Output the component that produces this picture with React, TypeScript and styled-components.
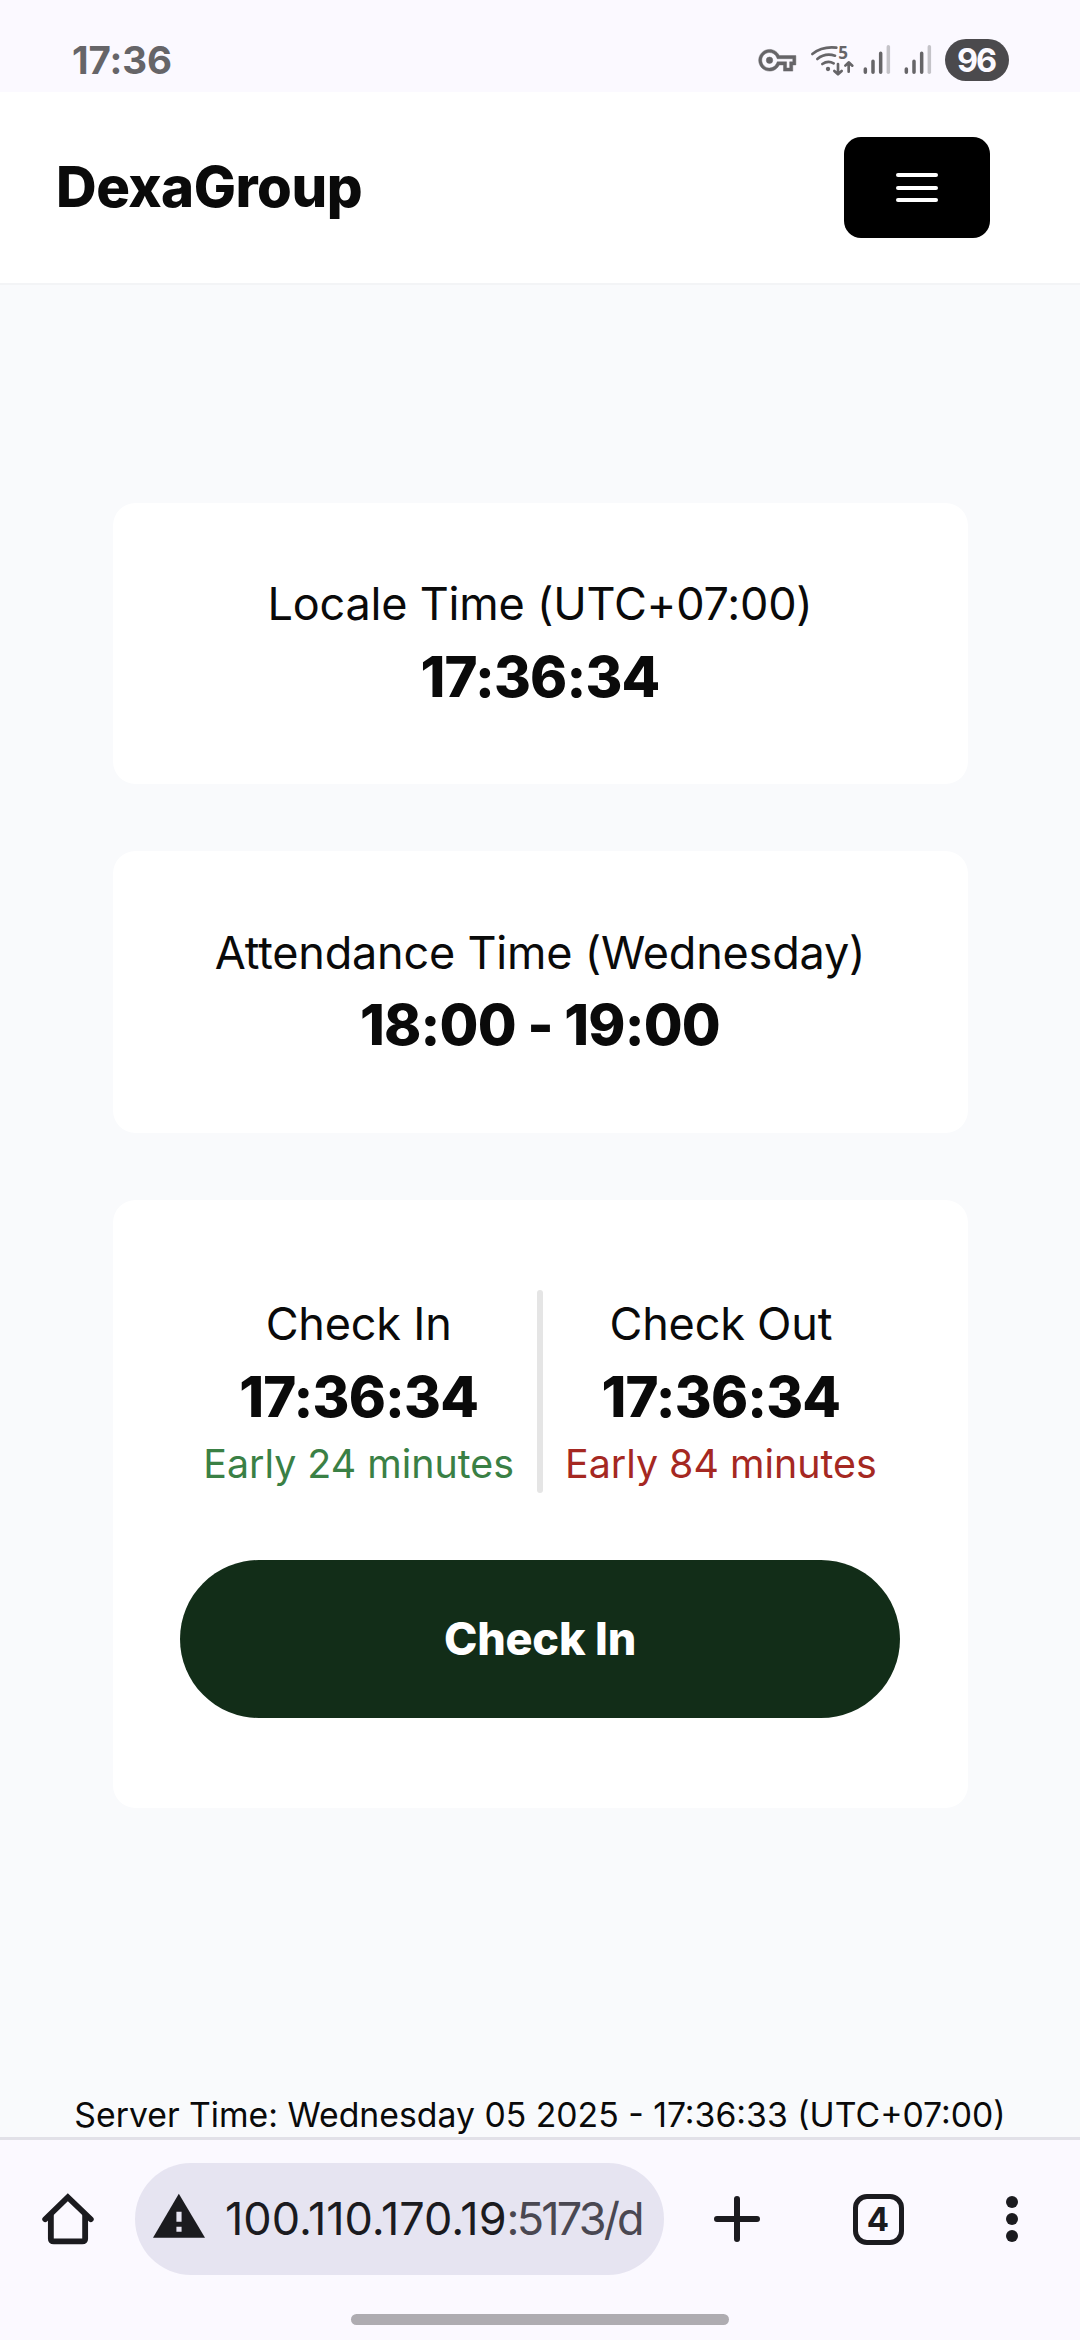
import React from "react";
import styled, { createGlobalStyle } from "styled-components";

const GlobalStyle = createGlobalStyle`
  *, *::before, *::after { box-sizing: border-box; }
  body { margin: 0; background: #f9fafc; }
`;

const Screen = styled.div`
  width: 1080px;
  height: 2340px;
  display: flex;
  flex-direction: column;
  overflow: hidden;
  background: #f9fafc;
  color: #0a0a0a;
  font-family: Inter, "Liberation Sans", sans-serif;
`;

const StatusBar = styled.div`
  flex: none;
  height: 92px;
  padding: 28px 71px 0 72px;
  display: flex;
  align-items: center;
  justify-content: space-between;
  background: #fbf9ff;
  color: #666568;
`;

const Clock = styled.span`
  font-size: 38.5px;
  font-weight: 700;
  letter-spacing: -0.1px;
  line-height: 42px;
`;

const StatusIcons = styled.div`
  display: flex;
  align-items: center;
`;

const Battery = styled.span`
  width: 64px;
  height: 42px;
  margin-left: 2px;
  border-radius: 21px;
  display: flex;
  align-items: center;
  justify-content: center;
  background: #4b4a4d;
  color: #fbf9ff;
  font-size: 32.5px;
  font-weight: 700;
  letter-spacing: -2px;
  padding-right: 2px;
`;

const Header = styled.header`
  flex: none;
  height: 193px;
  padding: 0 90px 0 56px;
  display: flex;
  align-items: center;
  justify-content: space-between;
  background: #fff;
  border-bottom: 2px solid #f3f4f6;
`;

const Brand = styled.h1`
  margin: 0;
  font-size: 56.25px;
  line-height: 78.75px;
  font-weight: 800;
  letter-spacing: -0.5px;
`;

const MenuButton = styled.button`
  width: 146px;
  height: 101px;
  border: 0;
  padding: 0;
  border-radius: 17px;
  background: #000;
  display: flex;
  flex-direction: column;
  align-items: center;
  justify-content: center;
  gap: 8.2px;
`;

const MenuLine = styled.span`
  width: 42px;
  height: 4px;
  border-radius: 2px;
  background: #fff;
`;

const Main = styled.main`
  flex: 1;
  min-height: 0;
  padding-top: 217.5px;
  display: flex;
  flex-direction: column;
  align-items: center;
  justify-content: space-between;
`;

const CardStack = styled.div`
  width: 855px;
  display: flex;
  flex-direction: column;
  gap: 67.5px;
`;

const Card = styled.section<{ $tall?: boolean }>`
  padding: ${(p) => (p.$tall ? "90px" : "67.5px")} 67.5px;
  border-radius: 22.5px;
  background: #fff;
  display: flex;
  flex-direction: column;
  gap: ${(p) => (p.$tall ? "67.5px" : "0")};
  text-align: center;
`;

const Label = styled.div`
  font-size: 45px;
  line-height: 67.5px;
  font-weight: 400;
  letter-spacing: -0.2px;
  white-space: nowrap;
`;

const Value = styled.div`
  font-size: 56.25px;
  line-height: 78.75px;
  font-weight: 800;
  letter-spacing: -0.84px;
  white-space: nowrap;
`;

const Note = styled.div<{ $color: string }>`
  font-size: 39.375px;
  line-height: 56.25px;
  font-weight: 400;
  white-space: nowrap;
  color: ${(p) => p.$color};
`;

const Punches = styled.div`
  display: flex;
  justify-content: center;
  gap: 22.5px;
`;

const Divider = styled.div`
  width: 6px;
  border-radius: 3px;
  background: #e5e5e5;
`;

const CheckButton = styled.button`
  height: 157.5px;
  border: 0;
  border-radius: 79px;
  background: #122d18;
  color: #fff;
  font: inherit;
  font-size: 45px;
  font-weight: 800;
  letter-spacing: -0.2px;
`;

const ServerTime = styled.div`
  font-size: 33.75px;
  line-height: 45px;
  font-weight: 400;
  white-space: nowrap;
`;

const BrowserBar = styled.footer`
  flex: none;
  height: 203px;
  border-top: 3px solid #e2e1e8;
  background: #fbf9ff;
  color: #1b1b1f;
  display: flex;
  flex-direction: column;
  align-items: center;
`;

const Toolbar = styled.div`
  width: 100%;
  height: 158px;
  padding-left: 38px;
  display: flex;
  align-items: center;
`;

const AddressPill = styled.div`
  width: 529px;
  height: 112px;
  margin-left: 37px;
  padding: 0 19px 0 18px;
  border-radius: 56px;
  background: #e6e4f1;
  display: flex;
  align-items: center;
  gap: 20px;
`;

const Address = styled.div`
  flex: 1;
  min-width: 0;
  white-space: nowrap;
  font-size: 45px;
  line-height: 60px;
`;

const AddressPath = styled.span`
  color: #4a4852;
  letter-spacing: -2.8px;
`;

const Slot = styled.div<{ $width: number }>`
  width: ${(p) => p.$width}px;
  display: flex;
  justify-content: center;
`;

const TabCount = styled.div`
  width: 51px;
  height: 51px;
  border: 5.5px solid #1b1b1f;
  border-radius: 14px;
  display: flex;
  align-items: center;
  justify-content: center;
  font-size: 33px;
  font-weight: 700;
`;

const Dots = styled.div`
  display: flex;
  flex-direction: column;
  gap: 5px;
`;

const Dot = styled.span`
  width: 12px;
  height: 12px;
  border-radius: 50%;
  background: #1b1b1f;
`;

const NavHandle = styled.div`
  width: 378px;
  height: 11px;
  margin-top: 16px;
  border-radius: 6px;
  background: #aeacb1;
`;

const KeyIcon = () => (
  <svg width="50" height="42" viewBox="50 57 150 126" fill="#666568">
    <path
      transform="translate(55 65) scale(4.65)"
      d="M22,19h-6v-4h-2.68c-1.14,2.42-3.6,4-6.32,4c-3.86,0-7-3.14-7-7s3.14-7,7-7c2.72,0,5.17,1.58,6.32,4H24v6h-2V19z M18,17h2v-4h2v-2H11.94l-0.23-0.67C11.01,8.34,9.11,7,7,7c-2.76,0-5,2.24-5,5s2.24,5,5,5c2.11,0,4.01-1.34,4.71-3.33L11.94,13H18V17z M7,14.1a2.1,2.1 0 1 1 0,-4.2a2.1,2.1 0 1 1 0,4.2z"
      stroke="#666568"
      strokeWidth="0.3"
    />
  </svg>
);

const WifiIcon = () => (
  <svg width="54" height="42" viewBox="200 57 162 126" fill="none" stroke="#666568" strokeWidth="8" strokeLinecap="round">
    <path d="M216 102Q246 78 288 83" />
    <path d="M231 117Q254 98 284 107" />
    <path d="M246 132Q263 120 280 130" />
    <circle cx="263" cy="147" r="6.5" fill="#666568" stroke="none" />
    <path d="M293 132V162M282 153L293 163L304 153" strokeLinejoin="round" />
    <path d="M325 155V128M315 137L325 127L336 137" strokeLinejoin="round" />
    <text x="294" y="117" fill="#666568" stroke="none" fontSize="51" fontWeight="700" fontFamily="Open Sans, sans-serif">
      5
    </text>
  </svg>
);

const SignalIcon = () => (
  <svg width="41" height="42" viewBox="362 57 123 126" strokeWidth="10.5" strokeLinecap="round" stroke="#666568">
    <path d="M375 147V157M398 124V157M421 100V157" />
    <path d="M444 80V157" stroke="#c4c3c8" />
  </svg>
);

const HomeIcon = () => (
  <svg width="60" height="58" viewBox="110 330 175 175" preserveAspectRatio="none" fill="none" stroke="#1b1b1f" strokeWidth="17">
    <path d="M131 418L197 352L264 418" strokeLinecap="round" strokeLinejoin="miter" />
    <path d="M147.500 405V477Q147.500 485 156 485H239Q247.500 485 247.500 477V405" />
  </svg>
);

const WarningIcon = () => (
  <svg width="52" height="58" viewBox="446 330 151 175" preserveAspectRatio="none">
    <path d="M521 341L597 474H446Z" fill="#1b1b1f" />
    <path d="M514 396h15v30h-15zM514 441h15v15h-15z" fill="#e6e4f1" />
  </svg>
);

const PlusIcon = () => (
  <svg width="46" height="46" viewBox="0 0 46 46" stroke="#1b1b1f" strokeWidth="6" strokeLinecap="round">
    <path d="M23 3V43M3 23H43" />
  </svg>
);

const punches = [
  { title: "Check In", time: "17:36:34", note: "Early 24 minutes", color: "#3a8045" },
  { title: "Check Out", time: "17:36:34", note: "Early 84 minutes", color: "#a52822" },
];

function Punch({ title, time, note, color }: (typeof punches)[number]) {
  return (
    <div>
      <Label>{title}</Label>
      <Value>{time}</Value>
      <Note $color={color}>{note}</Note>
    </div>
  );
}

export default function App() {
  return (
    <>
      <GlobalStyle />
      <Screen>
        <StatusBar>
          <Clock>17:36</Clock>
          <StatusIcons>
            <KeyIcon />
            <WifiIcon />
            <SignalIcon />
            <SignalIcon />
            <Battery>96</Battery>
          </StatusIcons>
        </StatusBar>
        <Header>
          <Brand>DexaGroup</Brand>
          <MenuButton aria-label="Menu">
            <MenuLine />
            <MenuLine />
            <MenuLine />
          </MenuButton>
        </Header>
        <Main>
          <CardStack>
            <Card>
              <Label>Locale Time (UTC+07:00)</Label>
              <Value>17:36:34</Value>
            </Card>
            <Card>
              <Label>Attendance Time (Wednesday)</Label>
              <Value>18:00 - 19:00</Value>
            </Card>
            <Card $tall>
              <Punches>
                <Punch {...punches[0]} />
                <Divider />
                <Punch {...punches[1]} />
              </Punches>
              <CheckButton>Check In</CheckButton>
            </Card>
          </CardStack>
          <ServerTime>Server Time: Wednesday 05 2025 - 17:36:33 (UTC+07:00)</ServerTime>
        </Main>
        <BrowserBar>
          <Toolbar>
            <HomeIcon />
            <AddressPill>
              <WarningIcon />
              <Address>
                100.110.170.19<AddressPath>:5173/d</AddressPath>
              </Address>
            </AddressPill>
            <Slot $width={146}>
              <PlusIcon />
            </Slot>
            <Slot $width={136}>
              <TabCount>4</TabCount>
            </Slot>
            <Slot $width={132}>
              <Dots>
                <Dot />
                <Dot />
                <Dot />
              </Dots>
            </Slot>
          </Toolbar>
          <NavHandle />
        </BrowserBar>
      </Screen>
    </>
  );
}
